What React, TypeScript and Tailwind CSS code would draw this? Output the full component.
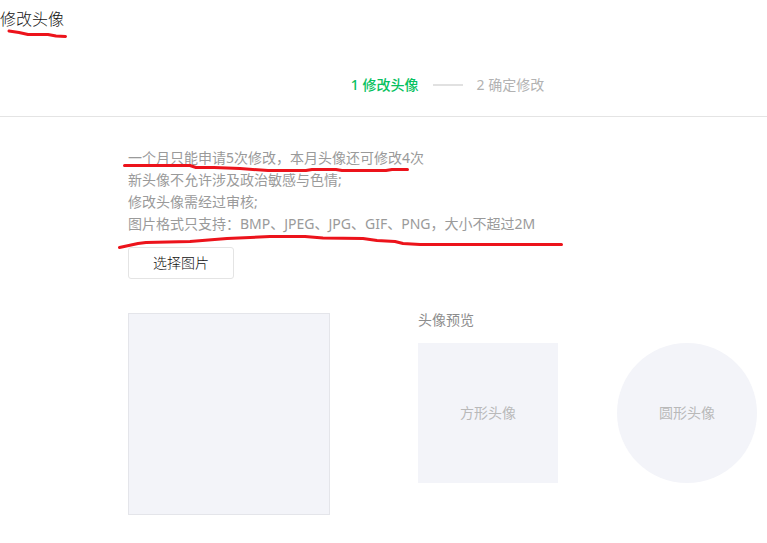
const notes = [
  '一个月只能申请5次修改，本月头像还可修改4次',
  '新头像不允许涉及政治敏感与色情;',
  '修改头像需经过审核;',
  '图片格式只支持：BMP、JPEG、JPG、GIF、PNG，大小不超过2M',
];

// Red pen marks drawn over the page
const marks = [
  'M9 31 L19 32.5 L28 34.5 L48 34.5 L56 36 L65.5 36.5',
  'M124.5 165.5 L190 165.5 L196 167.5 L214 167.5 L240 168.5 L268 170.5 L306 170.5 L312 169.5 L336 169.5 L342 170.5 L386 170.5 L392 169.5 L407.5 169.5',
  'M119.5 247.5 L138 243.5 L146 242.5 L190 241.5 L227 238.5 L270 236.5 L305 236.5 L323 238 L363 238.5 L377 240.5 L395 241.5 L403 243.5 L420 244.5 L561.5 244.5',
];

function Steps() {
  return (
    <ol className="flex items-center justify-center text-sm leading-6">
      <li className="font-medium text-[#07c160]" aria-current="step">1 修改头像</li>
      <li aria-hidden="true" className="mx-3.5 h-0.5 w-[30px] bg-[#e1e1e1]" />
      <li className="text-[#b2b2b2]">2 确定修改</li>
    </ol>
  );
}

export default function App() {
  return (
    <div className="relative min-h-screen overflow-hidden bg-white font-['Noto_Sans','Noto_Sans_CJK_SC',sans-serif] text-sm text-[#9a9a9a]">
      <header className="border-b border-[#e4e4e4] pt-[7px] pb-[19px]">
        <h1 className="mb-[42px] text-base leading-6 font-light text-[#111111]">修改头像</h1>
        <div className="pl-32">
          <Steps />
        </div>
      </header>

      <main className="pt-[30px] pl-32">
        <div className="leading-[22px]">
          {notes.map((note) => (
            <p key={note}>{note}</p>
          ))}
        </div>

        <button
          type="button"
          className="mt-3 block h-8 w-[106px] rounded-[3px] border border-[#e4e4e4] bg-white font-light text-[#111111]"
        >
          选择图片
        </button>

        <div className="mt-[34px] flex items-start gap-[88px]">
          <div className="size-[202px] shrink-0 border border-[#e4e5ea] bg-[#f3f4f9]" />
          <section>
            <h2 className="mb-4 leading-[14px] text-[#8d8d8d]">头像预览</h2>
            <div className="flex gap-[59px] text-[#b9b9b9]">
              <div className="flex size-[140px] shrink-0 items-center justify-center bg-[#f3f4f9]">方形头像</div>
              <div className="flex size-[140px] shrink-0 items-center justify-center rounded-full bg-[#f3f4f9]">
                圆形头像
              </div>
            </div>
          </section>
        </div>
      </main>

      <svg
        className="pointer-events-none absolute top-0 left-0"
        width="600"
        height="260"
        viewBox="0 0 600 260"
        fill="none"
        stroke="#ec131b"
        strokeWidth="3"
        strokeLinecap="round"
        strokeLinejoin="round"
        aria-hidden="true"
      >
        {marks.map((d) => (
          <path key={d} d={d} />
        ))}
      </svg>
    </div>
  );
}
